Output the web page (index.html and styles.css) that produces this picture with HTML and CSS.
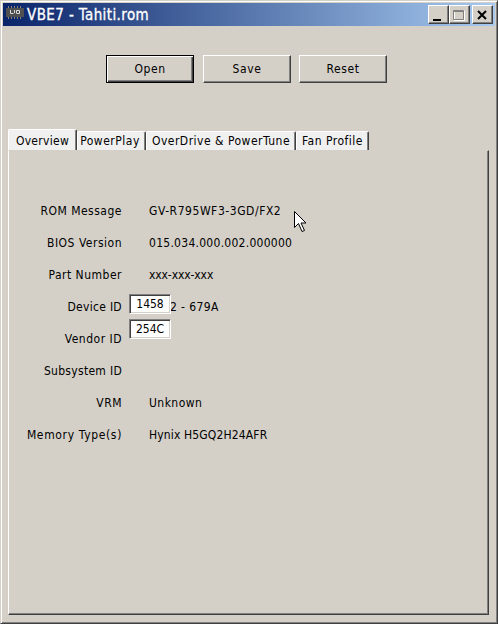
FILE: index.html
```html
<!DOCTYPE html>
<html lang="en">
<head>
    <meta charset="UTF-8">
    <title>VBE7 - Tahiti.rom</title>
    <link rel="stylesheet" href="styles.css">
</head>
<body>
    <div class="window">
        <header class="titlebar">
            <svg class="app-icon" width="18" height="13" viewBox="0 0 18 13">
                <path d="M2.5 0v13M5.5 0v13M8.5 0v13M11.5 0v13M14.5 0v13" stroke="#8c8470"/>
                <rect x="0" y="2" width="18" height="9" fill="#505050"/>
                <path d="M4.500 4v3.500h3M8.500 4v3M10.500 7V4.500h3v3h-3" fill="none" stroke="#ddd"/>
            </svg>
            <h1>VBE7 - Tahiti.rom</h1>
            <div class="controls">
                <button class="control"><svg width="18" height="16"><path d="M4 12h8v2H4z"/></svg></button>
                <button class="control"><svg width="18" height="16"><path d="M4.500 4h10v9.500h-10z" fill="none" stroke="#fff"/><path d="M3.500 3.500h10v9h-10zM3.500 4.500h10" fill="none" stroke="#808080"/></svg></button>
                <button class="control close"><svg width="18" height="16"><path d="M5 4l8 8M13 4l-8 8" stroke="#000" stroke-width="2"/></svg></button>
            </div>
        </header>
        <div class="toolbar">
            <button class="btn default">Open</button>
            <button class="btn">Save</button>
            <button class="btn">Reset</button>
        </div>
        <nav class="tabs">
            <button class="tab active">Overview</button>
            <button class="tab powerplay">PowerPlay</button>
            <button class="tab overdrive">OverDrive &amp; PowerTune</button>
            <button class="tab fan">Fan Profile</button>
        </nav>
        <main class="panel">
            <dl class="info">
                <dt>ROM Message</dt><dd class="message">GV-R795WF3-3GD/FX2</dd>
                <dt>BIOS Version</dt><dd class="version">015.034.000.002.000000</dd>
                <dt>Part Number</dt><dd class="part">xxx-xxx-xxx</dd>
                <dt class="id">Device ID</dt><dd class="device">2 - 679A<input class="edit first" value="1458"><input class="edit second" value="254C"></dd>
                <dt>Vendor ID</dt><dd></dd>
                <dt class="id">Subsystem ID</dt><dd></dd>
                <dt>VRM</dt><dd class="vrm">Unknown</dd>
                <dt class="memory">Memory Type(s)</dt><dd>Hynix H5GQ2H24AFR</dd>
            </dl>
        </main>
    </div>
    <svg class="cursor" width="13" height="22" viewBox="0 0 13 22">
        <path d="M.5.500v16l4-4 3.500 8 2.500-1-3.500-7.500h5z" fill="#fff" stroke="#000"/>
    </svg>
</body>
</html>
```
FILE: styles.css
```css
* {
    box-sizing: border-box;
}
body {
    margin: 0;
    background: #d4d0c8;
    font-family: "DejaVu Sans Condensed", "DejaVu Sans", sans-serif;
    font-size: 12px;
    color: #000;
}
button, input {
    font: inherit;
    color: inherit;
    padding: 0;
    margin: 0;
    border-radius: 0;
}
.window {
    width: 498px;
    height: 624px;
    padding: 1px;
    display: flex;
    flex-direction: column;
    background: #d4d0c8;
    border: 1px solid;
    border-color: #d4d0c8 #404040 #404040 #d4d0c8;
    box-shadow: inset 1px 1px #fff, inset -1px -1px #808080;
}
.titlebar {
    height: 23px;
    margin: 1px 1px 0;
    padding: 0 2px 0 3px;
    display: flex;
    align-items: center;
    background: linear-gradient(to right, #0a246a, #a6caf0);
}
.app-icon {
    margin-top: -4px;
}
.titlebar h1 {
    margin: 0 0 0 3px;
    flex: 1;
    font-size: 15px;
    font-weight: normal;
    letter-spacing: 0.4px;
    color: #fff;
    -webkit-text-stroke: 0.3px #fff;
}
.controls {
    display: flex;
}
.control {
    width: 21px;
    height: 19px;
    border: 1px solid;
    border-color: #fff #404040 #404040 #fff;
    box-shadow: inset -1px -1px #808080;
    background: #d4d0c8;
}
.control svg {
    display: block;
}
.close {
    margin-left: 2px;
}
.toolbar {
    display: flex;
    gap: 8px;
    padding: 29px 0 0 104px;
    height: 103px;
}
.btn {
    width: 88px;
    height: 28px;
    background: #d4d0c8;
    border: 1px solid;
    border-color: #fff #404040 #404040 #fff;
    box-shadow: inset -1px -1px #808080;
    font-size: 12px;
    letter-spacing: 0.6px;
}
.btn.default {
    margin-right: 1px;
    border-color: #000;
    box-shadow: inset 1px 1px #fff, inset -1px -1px #404040, inset -2px -2px #808080;
}
.tabs {
    display: flex;
    align-items: flex-end;
    height: 21px;
    padding-left: 6px;
}
.tab {
    height: 19px;
    background: #f0f0f0;
    border: 1px solid;
    border-width: 1px 1px 0;
    border-color: #fff #404040 #fff #fff;
    border-radius: 2px 2px 0 0;
    box-shadow: inset -1px 0 #808080;
    letter-spacing: 0.5px;
    white-space: nowrap;
}
.tab.active {
    width: 69px;
    height: 21px;
    padding-top: 1px;
    letter-spacing: 0.3px;
}
.powerplay {
    width: 69px;
    padding-right: 3px;
}
.overdrive {
    width: 150px;
}
.fan {
    width: 73px;
}
.panel {
    flex: 1;
    margin: 0 7px 7px 6px;
    border: 1px solid;
    border-color: transparent #404040 #404040 #fff;
    box-shadow: inset -1px -1px #808080;
}
.info {
    margin: 44px 0 0;
    display: grid;
    grid-template-columns: 113px 1fr;
    grid-auto-rows: 32px;
    column-gap: 27px;
    line-height: 32px;
}
.info dt {
    text-align: right;
    letter-spacing: 0.5px;
}
.info .id {
    letter-spacing: 0.3px;
}
.info .memory {
    letter-spacing: 0.65px;
}
.info dd {
    margin: 0;
    letter-spacing: 0.15px;
}
.info .message {
    letter-spacing: 0.55px;
}
.info .version {
    letter-spacing: 0.27px;
}
.info .part {
    letter-spacing: -0.1px;
}
.info .vrm {
    letter-spacing: 0.45px;
}
.info .device {
    position: relative;
    padding-left: 21px;
    letter-spacing: 0.4px;
}
.edit {
    position: absolute;
    left: -20px;
    width: 42px;
    height: 20px;
    border: 1px solid;
    border-color: #808080 #fff #fff #808080;
    box-shadow: inset 1px 1px #404040, inset -1px -1px #d4d0c8;
    background: #fff;
    text-align: center;
}
.first {
    top: 3px;
}
.second {
    top: 28px;
}
.cursor {
    position: absolute;
    left: 294px;
    top: 211px;
}
```
